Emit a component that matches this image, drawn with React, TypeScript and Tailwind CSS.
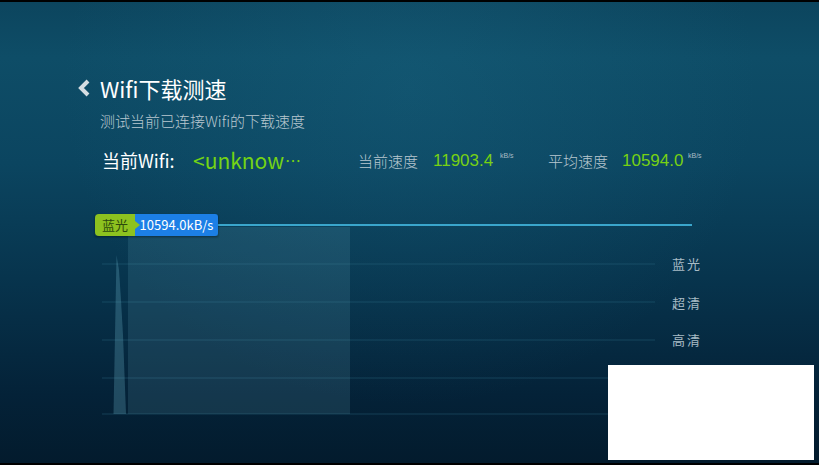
import React from 'react';

const font = { fontFamily: '"Noto Sans CJK SC", "Noto Sans", sans-serif' };
const numFont = { fontFamily: '"Liberation Sans", sans-serif' };

const gridRows = [264, 302, 340, 378, 414];

const levels = [
  { label: '蓝光', y: 264 },
  { label: '超清', y: 303 },
  { label: '高清', y: 340 },
];

const SpeedChart: React.FC = () => {
  return (
    <div className="relative h-[215px] w-full">
      {/* chart canvas, origin at x=0,y=210 of the page */}
      <svg className="absolute left-0 top-0" width="819" height="215" viewBox="0 210 819 215">
        {gridRows.map((y) => (
          <line key={y} x1="102" y1={y} x2="655" y2={y} stroke="#2d6f86" strokeOpacity="0.4" strokeWidth="1" />
        ))}
        <rect x="128" y="227" width="222" height="187" fill="#6fb6cc" fillOpacity="0.15" />
        <polygon points="113.5,414 116.5,255 119,270 121,300 123,335 126,414" fill="#6fb6cc" fillOpacity="0.28" />
        <line x1="216" y1="225" x2="692" y2="225" stroke="#3aa6cc" strokeWidth="2" />
      </svg>

      {levels.map((l) => (
        <span
          key={l.label}
          className="absolute left-[672px] text-[13px] leading-none tracking-[2px] text-[#a9bcc6]"
          style={{ ...font, top: l.y - 210 - 7 }}
        >
          {l.label}
        </span>
      ))}

      {/* current level tag */}
      <div className="absolute left-[95px] top-[4px] flex h-[22px] items-stretch shadow-[0_1px_2px_rgba(0,0,0,0.4)]">
        <div className="relative flex w-[40px] items-center justify-center rounded-l-[4px] bg-[#8dc21f] text-[13px] text-[#2c4a0c]" style={font}>
          蓝光
          <span className="absolute right-[-5px] top-[7px] h-0 w-0 border-y-[4px] border-l-[5px] border-y-transparent border-l-[#8dc21f]" />
        </div>
        <div className="flex w-[83px] items-center justify-center rounded-r-[3px] bg-[#1c7fe6] text-[13px] text-white" style={font}>
          10594.0kB/s
        </div>
      </div>
    </div>
  );
};

const App: React.FC = () => {
  return (
    <div className="relative h-[465px] w-[819px] overflow-hidden bg-black" style={font}>
      <div className="absolute inset-x-0 top-[2px] bottom-[2px] bg-[linear-gradient(180deg,#0c455e_0%,#0e4d67_12%,#0b4560_35%,#07344d_60%,#042238_85%,#031b2d_100%)]">
        <div className="absolute inset-0 bg-[radial-gradient(ellipse_at_50%_18%,rgba(30,110,140,0.28),transparent_60%)]" />
      </div>

      <div className="relative flex flex-col">
        <div className="ml-[78px] mt-[75px] flex h-[26px] items-center gap-[9px]">
          <svg width="13" height="18" viewBox="0 0 13 18">
            <polyline points="10,2 3,9 10,16" fill="none" stroke="#d5dde2" strokeWidth="4" strokeLinejoin="miter" />
          </svg>
          <h1 className="text-[22px] font-normal leading-none text-white">Wifi下载测速</h1>
        </div>

        <p className="ml-[100px] mt-[12px] text-[15px] font-light leading-none text-[#b9c8d0]">测试当前已连接Wifi的下载速度</p>

        <div className="ml-[102px] mt-[20px] flex h-[24px] items-center">
          <span className="w-[91px] text-[18px] leading-none text-white">当前Wifi:</span>
          <span className="flex w-[165px] items-center text-[21px] leading-none text-[#74d414]">
            &lt;unknow<span className="ml-[1px] text-[16px]">⋯</span>
          </span>

          <span className="w-[75px] text-[15px] font-light leading-none text-[#b9c8d0]">当前速度</span>
          <span className="w-[67px] text-[17px] leading-none text-[#77d113]" style={numFont}>11903.4</span>
          <span className="mb-[10px] w-[48px] text-[7px] leading-none text-[#a9bcc6]" style={numFont}>kB/s</span>

          <span className="w-[74px] text-[15px] font-light leading-none text-[#b9c8d0]">平均速度</span>
          <span className="w-[66px] text-[17px] leading-none text-[#77d113]" style={numFont}>10594.0</span>
          <span className="mb-[10px] text-[7px] leading-none text-[#a9bcc6]" style={numFont}>kB/s</span>
        </div>

        <div className="mt-[38px]">
          <SpeedChart />
        </div>
      </div>

      <div className="absolute left-[608px] top-[365px] h-[95px] w-[206px] bg-white" />
    </div>
  );
};

export default App;
